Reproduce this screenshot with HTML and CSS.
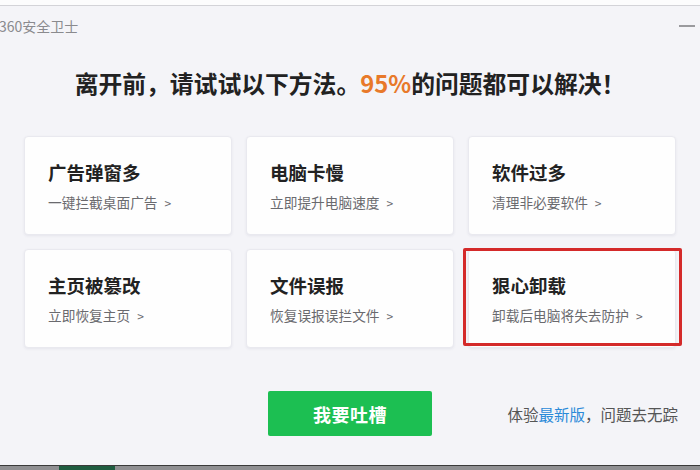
FILE: index.html
```
<!DOCTYPE html>
<html lang="zh-CN">
<head>
    <meta charset="UTF-8">
    <meta name="viewport" content="width=device-width, initial-scale=1.0">
    <title>360安全卫士</title>
    <link rel="stylesheet" href="styles.css">
</head>
<body>
    <div class="top-edge"></div>
    <main class="window">
        <header class="window-head">
            <span class="window-title">360安全卫士</span>
            <span class="window-min" title="最小化"></span>
        </header>

        <h1 class="headline">离开前，请试试以下方法。<em>95%</em>的问题都可以解决！</h1>

        <ul class="tips">
            <li class="tip">
                <h2>广告弹窗多</h2>
                <p>一键拦截桌面广告<span class="arrow">&gt;</span></p>
            </li>
            <li class="tip">
                <h2>电脑卡慢</h2>
                <p>立即提升电脑速度<span class="arrow">&gt;</span></p>
            </li>
            <li class="tip">
                <h2>软件过多</h2>
                <p>清理非必要软件<span class="arrow">&gt;</span></p>
            </li>
            <li class="tip">
                <h2>主页被篡改</h2>
                <p>立即恢复主页<span class="arrow">&gt;</span></p>
            </li>
            <li class="tip">
                <h2>文件误报</h2>
                <p>恢复误报误拦文件<span class="arrow">&gt;</span></p>
            </li>
            <li class="tip tip-marked">
                <h2>狠心卸载</h2>
                <p>卸载后电脑将失去防护<span class="arrow">&gt;</span></p>
            </li>
        </ul>

        <footer class="window-foot">
            <span></span>
            <button class="btn-feedback" type="button">我要吐槽</button>
            <p class="foot-note">体验<a href="#">最新版</a>，问题去无踪</p>
        </footer>
    </main>
    <div class="taskbar"><span class="taskbar-app"></span></div>
</body>
</html>
```

FILE: styles.css
```
/**
 * 基本設定
 */
* {box-sizing: border-box}
html, body {margin: 0; padding: 0}
body {
    width: 700px;
    height: 470px;
    overflow: hidden;
    display: flex;
    flex-direction: column;
    font-family: "Noto Sans CJK SC", "Noto Sans", sans-serif;
    color: #222;
    background: #f4f4f8;
}

/* 視窗最上緣 */
.top-edge {
    height: 6px;
    background: #fcfcfd;
    border-bottom: 1px solid #d3d3d8;
}

/**
 * 視窗本體
 */
.window {
    flex: 1;
    background: #f4f4f8;
}

.window-head {
    display: flex;
    justify-content: space-between;
    align-items: center;
    height: 20px;
    margin-top: 10px;
}
.window-title {
    font-size: 14px;
    line-height: 20px;
    color: #8a8a8e;
    margin-left: -1px;
}
.window-min {
    width: 16px;
    height: 2px;
    margin-right: 5px;
    background: #9a9a9e;
}

.headline {
    margin: 31px 0 0;
    font-size: 23.8px;
    line-height: 32px;
    font-weight: bold;
    text-align: center;
    color: #222;
}
.headline em {
    font-style: normal;
    color: #e8792a;
}

/**
 * 六個建議卡片
 */
.tips {
    list-style: none;
    margin: 37px 0 0 24px;
    padding: 0;
    display: grid;
    grid-template-columns: repeat(3, 208px);
    grid-auto-rows: 99px;
    column-gap: 14px;
    row-gap: 14px;
}
.tip {
    position: relative;
    padding: 23px 0 0 23px;
    background: #fefefe;
    border: 1px solid #e9e9ef;
    border-radius: 4px;
    box-shadow: 0 1px 3px rgba(40, 40, 80, .07);
}
.tip h2 {
    margin: 0;
    font-size: 18.5px;
    line-height: 24px;
    font-weight: bold;
    color: #222;
}
.tip p {
    margin: 8px 0 0;
    font-size: 13.7px;
    line-height: 20px;
    color: #6a6a6e;
}
.tip .arrow {
    margin-left: 7px;
    font-size: 12px;
}

/* 截圖上的紅框標記 */
.tip-marked::after {
    content: "";
    position: absolute;
    left: -6px;
    right: -7px;
    top: -2px;
    bottom: 1px;
    border: 3px solid #d42a2a;
    border-radius: 2px;
}

/**
 * 底部按鈕與提示
 */
.window-foot {
    display: grid;
    grid-template-columns: 1fr 164px 1fr;
    align-items: center;
    margin-top: 43px;
}
.btn-feedback {
    height: 45px;
    border: 0;
    border-radius: 2px;
    background: #1cbf52;
    color: #fff;
    font-family: inherit;
    font-size: 18px;
    font-weight: bold;
    letter-spacing: .5px;
}
.foot-note {
    justify-self: end;
    margin: 0 22px 0 0;
    font-size: 15.5px;
    color: #555;
}
.foot-note a {
    color: #2b8ad8;
    text-decoration: none;
}

/* 底下露出的工作列 */
.taskbar {
    height: 5px;
    flex: none;
    background: #8f8f92;
    border-top: 1px solid #3a3a3a;
}
.taskbar-app {
    display: block;
    width: 56px;
    height: 100%;
    margin-left: 59px;
    background: #1f5c40;
}
```
